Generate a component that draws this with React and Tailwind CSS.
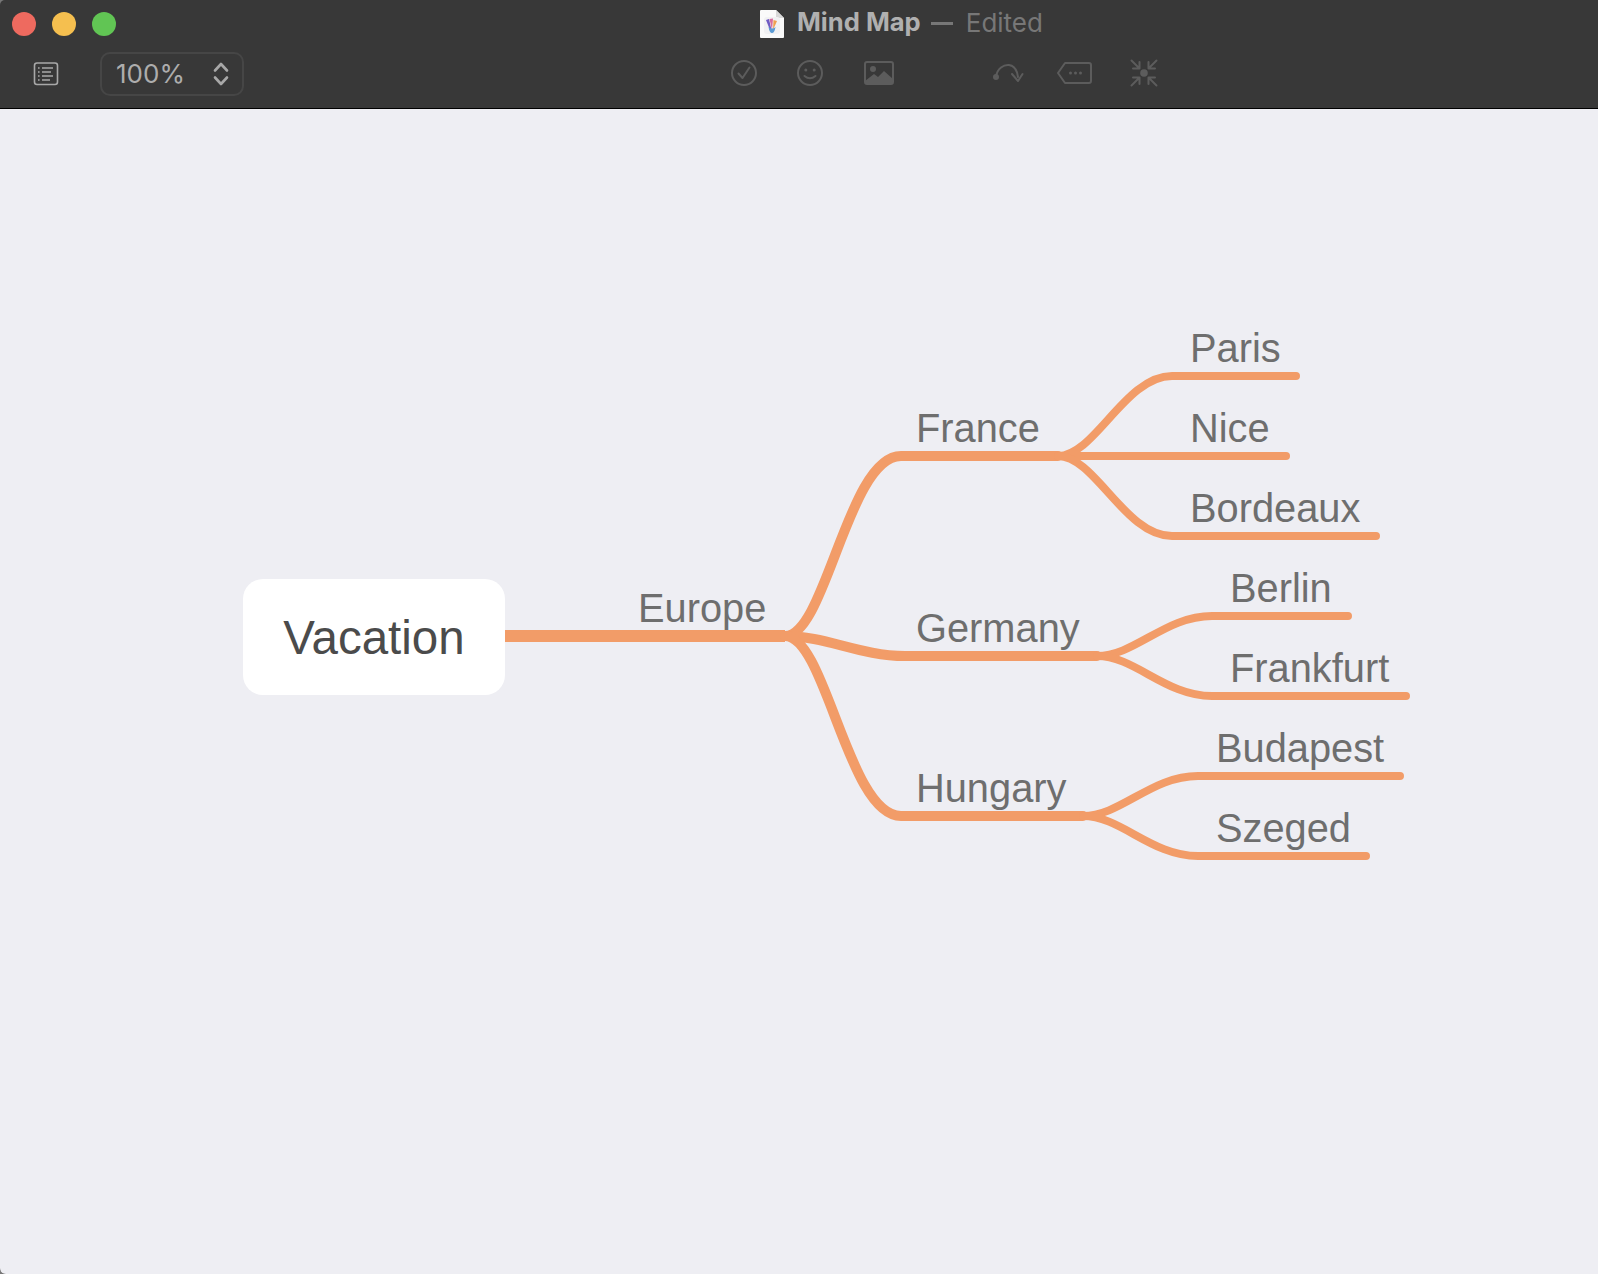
const ORANGE = "#f29c68";

const mid = [
  "M785 636 C 826 636 848 456 901 456 L 1058 456",
  "M785 636 C 826 636 860 656 905 656 L 1097 656",
  "M785 636 C 826 636 848 816 901 816 L 1083 816",
];

const leaf = [
  "M1058 456 C 1095 456 1125 376 1172 376 L 1296 376",
  "M1058 456 L 1286 456",
  "M1058 456 C 1095 456 1125 536 1172 536 L 1376 536",
  "M1097 656 C 1135 656 1165 616 1212 616 L 1348 616",
  "M1097 656 C 1135 656 1165 696 1212 696 L 1406 696",
  "M1083 816 C 1121 816 1151 776 1198 776 L 1400 776",
  "M1083 816 C 1121 816 1151 856 1198 856 L 1366 856",
];

const labels = [
  ["Europe", 638, 621],
  ["France", 916, 441],
  ["Germany", 916, 641],
  ["Hungary", 916, 801],
  ["Paris", 1190, 361],
  ["Nice", 1190, 441],
  ["Bordeaux", 1190, 521],
  ["Berlin", 1230, 601],
  ["Frankfurt", 1230, 681],
  ["Budapest", 1216, 761],
  ["Szeged", 1216, 841],
];

function Diagram() {
  return (
    <div className="relative flex-1 rounded-bl-[6px] bg-[#eeeef3]">
      <svg className="absolute left-0 top-[-109px]" width="1598" height="1274" fill="none" stroke={ORANGE} strokeLinecap="round">
        <path d="M505 636 L785 636" strokeWidth="12" strokeLinecap="butt" />
        {mid.map((d) => (
          <path key={d} d={d} strokeWidth="10" />
        ))}
        {leaf.map((d) => (
          <path key={d} d={d} strokeWidth="8" />
        ))}
      </svg>
      <div className="absolute left-[243px] top-[470px] flex h-[116px] w-[262px] items-center justify-center rounded-[20px] bg-white pt-[2px] font-['Liberation_Sans',sans-serif] text-[47.5px] text-[#4b4b4b]">
        Vacation
      </div>
      {labels.map(([t, x, y]) => (
        <div
          key={t}
          className="absolute whitespace-nowrap font-['Liberation_Sans',sans-serif] text-[39.8px] leading-[44px] text-[#6e6e6e]"
          style={{ left: x, top: y - 109 - 35 }}
        >
          {t}
        </div>
      ))}
    </div>
  );
}

function ListIcon() {
  return (
    <svg width="26" height="26" viewBox="0 0 26 26" fill="none" stroke="#a8a8a8" strokeWidth="1.6">
      <rect x="1.5" y="2" width="23" height="21.5" rx="2.5" />
      <path d="M9 7h11M9 11h9M9 15h11M9 19h8" />
      <path d="M5 7h1.6M5 11h1.6M5 15h1.6M5 19h1.6" />
    </svg>
  );
}

const DIM = "#5c5c5c";

function Toolbar() {
  return (
    <div className="flex h-[60px] items-start pt-[4px]">
      <div className="ml-[33px] mt-[9px] flex">
        <ListIcon />
      </div>
      <div className="ml-[41px] flex h-[44px] w-[144px] items-center justify-between rounded-[10px] border-2 border-[#464646] pb-[1px] pl-[14px] pr-[12px] font-['Inter',sans-serif] text-[26px] text-[#adadad]">
        <span>100%</span>
        <svg width="18" height="26" viewBox="0 0 18 26" fill="none" stroke="#a8a8a8" strokeWidth="2.6" strokeLinecap="round" strokeLinejoin="round">
          <path d="M3 9.5 L9 3 L15 9.5" />
          <path d="M3 16.5 L9 23 L15 16.5" />
        </svg>
      </div>
      <div className="ml-[486px] mt-[7px] flex items-center">
        <svg width="28" height="28" viewBox="0 0 28 28" fill="none" stroke={DIM} strokeWidth="2">
          <circle cx="14" cy="14" r="12" />
          <path d="M8.5 14.5 L12.5 19 L19.5 8.5" strokeLinecap="round" strokeLinejoin="round" />
        </svg>
        <svg className="ml-[38px]" width="28" height="28" viewBox="0 0 28 28" fill="none" stroke={DIM} strokeWidth="2">
          <circle cx="14" cy="14" r="12" />
          <circle cx="9.8" cy="11" r="1.5" fill={DIM} stroke="none" />
          <circle cx="18.2" cy="11" r="1.5" fill={DIM} stroke="none" />
          <path d="M8.5 17 Q14 21.5 19.5 17" strokeLinecap="round" />
        </svg>
        <svg className="ml-[39px]" width="32" height="26" viewBox="0 0 32 26" fill="none">
          <rect x="2" y="2" width="28" height="22" rx="2" stroke={DIM} strokeWidth="2" />
          <circle cx="10" cy="9" r="3" fill={DIM} />
          <path d="M2 21 L11 14 L15 17 L21 11 L30 19 V24 H2 Z" fill={DIM} />
        </svg>
        <svg className="ml-[97px]" width="32" height="24" viewBox="0 0 32 24" fill="none" stroke={DIM} strokeWidth="2" strokeLinecap="round" strokeLinejoin="round">
          <circle cx="4" cy="16" r="3" fill={DIM} stroke="none" />
          <path d="M4 16 C 5 7 12 3.5 17 4 C 22 4.5 25 9 26 16" />
          <path d="M20 13 L26 20 L30.5 13" />
        </svg>
        <svg className="ml-[32px]" width="37" height="24" viewBox="0 0 37 24" fill="none" stroke={DIM} strokeWidth="2" strokeLinejoin="round">
          <path d="M9 2 H33 a2 2 0 0 1 2 2 V20 a2 2 0 0 1 -2 2 H9 L2 12 Z" />
          <circle cx="14.5" cy="12" r="1.5" fill={DIM} stroke="none" />
          <circle cx="19.5" cy="12" r="1.5" fill={DIM} stroke="none" />
          <circle cx="24.5" cy="12" r="1.5" fill={DIM} stroke="none" />
        </svg>
        <svg className="ml-[37px]" width="28" height="28" viewBox="0 0 28 28" fill="none" stroke={DIM} strokeWidth="2" strokeLinecap="round" strokeLinejoin="round">
          <circle cx="14" cy="14" r="3.8" fill={DIM} stroke="none" />
          <path d="M1.5 1.5 L9 9 M3 9.5 H9.5 V3" />
          <path d="M26.5 1.5 L19 9 M25 9.5 H18.5 V3" />
          <path d="M1.5 26.5 L9 19 M3 18.5 H9.5 V25" />
          <path d="M26.5 26.5 L19 19 M25 18.5 H18.5 V25" />
        </svg>
      </div>
    </div>
  );
}

function DocIcon() {
  return (
    <svg width="24" height="28" viewBox="0 0 24 28">
      <path d="M0 1 Q0 0 1 0 H16 L24 8 V27 Q24 28 23 28 H1 Q0 28 0 27 Z" fill="#fafafa" />
      <path d="M16 0 L24 8 H17 Q16 8 16 7 Z" fill="#d8d8d8" />
      <rect x="4" y="7" width="16" height="17" rx="3" fill="#f1f1f3" />
      <path d="M6 10 L10 20 L11.5 20 L9 9 Z" fill="#6f5cc4" />
      <path d="M9.5 9 L12 20 L13 8.5 Z" fill="#d86b9a" />
      <path d="M13.5 10 L13 20 L17 11 Z" fill="#f0a050" />
      <path d="M8.5 17 Q12 20 15.5 17 Q14.5 23 12 23 Q9.5 23 8.5 17 Z" fill="#5b9bd5" />
    </svg>
  );
}

function TitleRow() {
  return (
    <div className="flex h-[48px] items-center pb-[1px]">
      <div className="ml-[12px] flex gap-[16px]">
        <div className="h-[24px] w-[24px] rounded-full bg-[#ee6a5f]" />
        <div className="h-[24px] w-[24px] rounded-full bg-[#f5bf4f]" />
        <div className="h-[24px] w-[24px] rounded-full bg-[#61c554]" />
      </div>
      <div className="ml-[644px] flex items-center">
        <DocIcon />
        <span className="ml-[13px] -translate-y-px font-['Inter',sans-serif] text-[25.6px] font-bold text-[#b0b0b0]">Mind Map</span>
        <span className="ml-[10px] h-[3px] w-[22px] bg-[#777777]" />
        <span className="ml-[13px] -translate-y-px font-['Inter',sans-serif] text-[26px] text-[#777777]">Edited</span>
      </div>
    </div>
  );
}

export default function App() {
  return (
    <div className="flex h-[1274px] w-[1598px] flex-col overflow-hidden bg-[#777777]">
      <div className="h-[109px] rounded-tl-[5px] border-b border-black bg-[#383838]">
        <TitleRow />
        <Toolbar />
      </div>
      <Diagram />
    </div>
  );
}
